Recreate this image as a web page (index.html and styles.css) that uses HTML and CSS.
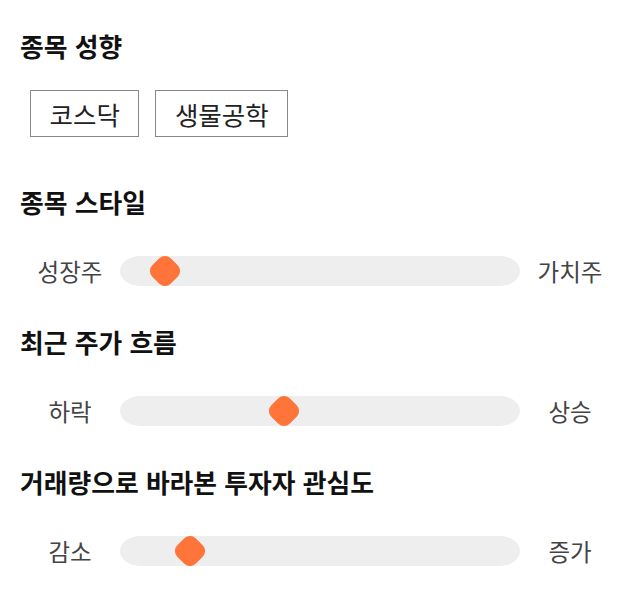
FILE: index.html
```html
<!DOCTYPE html>
<html lang="ko">
<head>
<meta charset="utf-8">
<link rel="stylesheet" href="styles.css">
</head>
<body>
<div class="page">
  <section class="sec sec-first">
    <h2 class="title">종목 성향</h2>
    <div class="chips">
      <span class="chip">코스닥</span>
      <span class="chip">생물공학</span>
    </div>
  </section>
  <section class="sec">
    <h2 class="title">종목 스타일</h2>
    <div class="row">
      <span class="label">성장주</span>
      <div class="track"><span class="thumb" style="left: 11.25%"></span></div>
      <span class="label">가치주</span>
    </div>
  </section>
  <section class="sec">
    <h2 class="title">최근 주가 흐름</h2>
    <div class="row">
      <span class="label">하락</span>
      <div class="track"><span class="thumb" style="left: 41%"></span></div>
      <span class="label">상승</span>
    </div>
  </section>
  <section class="sec">
    <h2 class="title">거래량으로 바라본 투자자 관심도</h2>
    <div class="row">
      <span class="label">감소</span>
      <div class="track"><span class="thumb" style="left: 17.5%"></span></div>
      <span class="label">증가</span>
    </div>
  </section>
</div>
</body>
</html>
```

FILE: styles.css
```css
* { box-sizing: border-box; }
html, body {
  margin: 0;
  padding: 0;
  background: #ffffff;
}
body {
  font-family: "Noto Sans CJK KR", "Noto Sans", sans-serif;
  color: #111111;
}
.page {
  padding: 28px 20px 0 20px;
}
.sec {
  margin-top: 38px;
}
.sec-first {
  margin-top: 0;
  margin-bottom: 47px;
}
.sec-first + .sec {
  margin-top: 0;
}
.title {
  margin: 0 0 36px 0;
  font-size: 25.8px;
  line-height: 36px;
  font-weight: 700;
  color: #111111;
}
.sec-first .title {
  margin-bottom: 26px;
}
.chips {
  display: flex;
  gap: 16px;
  padding-left: 10px;
}
.chip {
  display: inline-flex;
  align-items: center;
  height: 47px;
  padding: 0 18.5px;
  border: 1px solid #888888;
  font-size: 25.5px;
  color: #222222;
}
.row {
  display: flex;
  align-items: center;
  height: 30px;
}
.label {
  width: 100px;
  flex: none;
  text-align: center;
  font-size: 23.5px;
  line-height: 30px;
  color: #444444;
}
.track {
  position: relative;
  flex: 1;
  height: 30px;
  background: #eeeeee;
  border-radius: 20px / 15px;
}
.thumb {
  position: absolute;
  top: 50%;
  width: 26px;
  height: 26px;
  background: #ff7438;
  border-radius: 8px;
  transform: translate(-50%, -50%) rotate(45deg);
}
```
